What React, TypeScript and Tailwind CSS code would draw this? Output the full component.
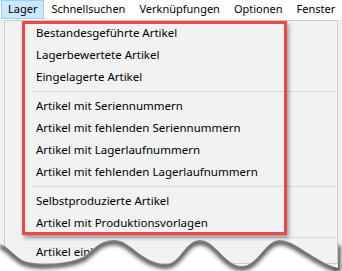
import React from 'react';

const menuBar = ['Schnellsuchen', 'Verknüpfungen', 'Optionen', 'Fenster'];

type Entry = { label: string } | { sep: true };

const entries: Entry[] = [
  { label: 'Bestandesgeführte Artikel' },
  { label: 'Lagerbewertete Artikel' },
  { label: 'Eingelagerte Artikel' },
  { sep: true },
  { label: 'Artikel mit Seriennummern' },
  { label: 'Artikel mit fehlenden Seriennummern' },
  { label: 'Artikel mit Lagerlaufnummern' },
  { label: 'Artikel mit fehlenden Lagerlaufnummern' },
  { sep: true },
  { label: 'Selbstproduzierte Artikel' },
  { label: 'Artikel mit Produktionsvorlagen' },
  { sep: true },
  { label: 'Artikel einlagern' },
];

const edge =
  'M0,14 C8,16 14,26 24,31 C40,36 70,34 85,26 C95,18 100,10 115,10 C130,10 140,32 165,34 C180,35 185,10 200,10 C215,10 225,36 242,36 C258,36 265,10 280,10 C295,10 315,32 338,38';

function TornEdge() {
  return (
    <svg className="absolute left-0 top-[230px]" width="342" height="41" viewBox="0 0 342 41">
      <defs>
        <clipPath id="paper">
          <path d={edge + ' L338,13 L342,13 L342,41 L0,41 Z'} />
        </clipPath>
        <filter id="blur" x="-10%" y="-50%" width="120%" height="200%">
          <feGaussianBlur stdDeviation="2" />
        </filter>
      </defs>
      <path d={edge + ' L338,13 L342,13 L342,41 L0,41 Z'} fill="#ffffff" />
      <g clipPath="url(#paper)">
        <path d={edge + ' L338,13'} transform="translate(0,2)" fill="none" stroke="#444" strokeWidth="5" filter="url(#blur)" />
      </g>
    </svg>
  );
}

export default function App() {
  return (
    <div
      className="relative w-[342px] h-[271px] overflow-hidden bg-[#f0f0f0] text-[11.5px] text-black"
      style={{ fontFamily: '"Noto Sans", "Open Sans", sans-serif' }}
    >
      <div className="flex h-[20px] bg-white text-[11px]">
        <div className="ml-px flex h-[19px] items-center border border-[#99d1ff] bg-[#cce8ff] px-[6px]">Lager</div>
        {menuBar.map((m) => (
          <div key={m} className="flex h-[19px] items-center px-[7px]">
            {m}
          </div>
        ))}
      </div>

      <div className="ml-[4px] w-[334px] border border-[#cccccc] bg-[#f2f2f2] pt-px">
        {entries.map((e, i) =>
          'sep' in e ? (
            <div key={i} className="flex h-[7px] items-center pl-[27px] pr-px">
              <div className="h-px w-full bg-[#d7d7d7]" />
            </div>
          ) : (
            <div key={i} className="flex h-[22px] items-center pl-[31px]">
              {e.label}
            </div>
          )
        )}
      </div>

      <div className="absolute left-[22px] top-[21px] h-[214px] w-[265px] border-[3px] border-[#f2464b] shadow-[2px_3px_4px_rgba(0,0,0,0.35)]" />

      <TornEdge />
    </div>
  );
}
